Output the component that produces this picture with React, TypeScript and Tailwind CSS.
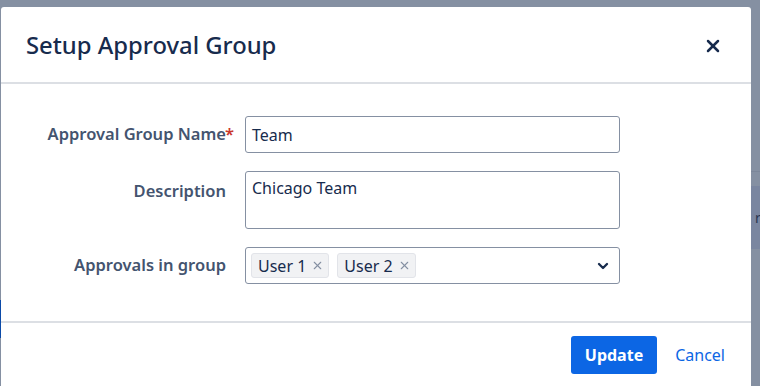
import { X, ChevronDown } from 'lucide-react';

const font = { fontFamily: '"Noto Sans", "Open Sans", sans-serif' };

function Tag({ label }: { label: string }) {
  return (
    <span className="flex h-[25px] items-center gap-[5px] rounded-[3px] border border-[#e2e4e9] bg-[#f1f2f4] pl-[6px] pr-[4px] text-[16px] text-[#172b4d]">
      {label}
      <X className="h-[13px] w-[13px] text-[#8590a2]" strokeWidth={2} />
    </span>
  );
}

export default function App() {
  return (
    <div className="relative h-[386px] w-[760px] overflow-hidden bg-[#8590a2]" style={font}>
      {/* dimmed page behind the dialog */}
      <div className="absolute right-0 top-[57px] h-[115px] w-[9px] border-b border-[#7c879a]" />
      <div className="absolute right-0 top-[186px] h-[63px] w-[9px] bg-[#7a86a0]">
        <span className="absolute left-[4px] top-[25px] text-[14px] leading-none text-[#2a3550]">r</span>
      </div>
      <div className="absolute left-0 top-[300px] h-[38px] w-[1px] bg-[#0b4aa8]" />

      <div className="absolute left-[1px] top-[7px] w-[750px] rounded-t-[3px] bg-white">
        {/* Header */}
        <div className="flex h-[75px] items-center justify-between pl-[25px] pr-[28px] pt-[3px]">
          <h1 className="text-[23.8px] font-medium text-[#172b4d]">Setup Approval Group</h1>
          <X className="h-[20px] w-[20px] text-[#172b4d]" strokeWidth={3} />
        </div>
        <div className="h-[2px] bg-[#dcdfe4]" />

        {/* Body */}
        <div className="flex flex-col gap-[18px] pb-[37px] pt-[32px]">
          <div className="flex items-center">
            <label className="relative w-[225px] text-right text-[16.5px] font-semibold text-[#44546f]">
              Approval Group Name
              <span className="absolute -right-[8px] top-0 text-[#c9372c]">*</span>
            </label>
            <div className="ml-[19px] flex h-[37px] w-[375px] items-center rounded-[3px] border border-[#8590a2] px-[6px] text-[16px] text-[#172b4d]">
              Team
            </div>
          </div>
          <div className="flex items-start">
            <label className="w-[225px] pt-[8px] text-right text-[16.5px] font-semibold text-[#44546f]">
              Description
            </label>
            <div className="ml-[19px] h-[58px] w-[375px] rounded-[3px] border border-[#8590a2] px-[6px] pt-[4px] text-[16px] text-[#172b4d]">
              Chicago Team
            </div>
          </div>
          <div className="flex items-center">
            <label className="w-[225px] text-right text-[16.5px] font-semibold text-[#44546f]">
              Approvals in group
            </label>
            <div className="ml-[19px] flex h-[37px] w-[375px] items-center rounded-[3px] border border-[#8590a2] pl-[5px] pr-[8px]">
              <div className="flex flex-1 items-center gap-[8px]">
                <Tag label="User 1" />
                <Tag label="User 2" />
              </div>
              <ChevronDown className="h-[16px] w-[16px] text-[#172b4d]" strokeWidth={3.5} />
            </div>
          </div>
        </div>

        <div className="h-[2px] bg-[#dcdfe4]" />

        {/* Footer */}
        <div className="flex items-center justify-end gap-[18px] pr-[26px] pt-[13px] pb-[20px]">
          <button className="h-[38px] rounded-[3px] bg-[#0c66e4] px-[14px] text-[16px] font-bold text-white">
            Update
          </button>
          <button className="text-[16px] text-[#0c66e4]">Cancel</button>
        </div>
      </div>
    </div>
  );
}
